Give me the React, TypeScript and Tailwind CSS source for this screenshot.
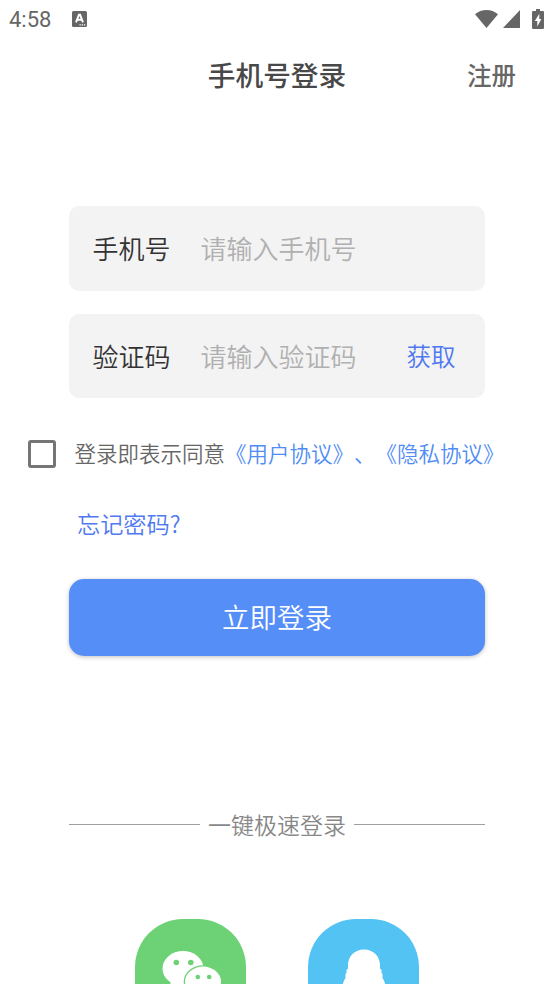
import React from "react";

interface FieldProps {
    label: string;
    placeholder: string;
    action?: string;
}

const StatusBar: React.FC = () => {
    return (
        <div className="flex h-[38px] items-center justify-between pl-[9px] pr-[10px] text-[#666]">
            <div className="flex items-center gap-[21px]">
                <span className="pt-px font-[Roboto] text-[22px] font-normal leading-none">4:58</span>
                <svg width="15" height="17" viewBox="0 0 15 17" fill="currentColor">
                    <rect width="15" height="16" rx="1.5"/>
                    <path d="M4 11.300 6.900 3.800h1.200l2.900 7.500M5.200 8.800h4.600" fill="none" stroke="#fff" strokeWidth="1.900"/>
                    <path d="M7.500 13.300h1.300v1.200H7.500zM9.700 13.300H11v1.200H9.700zM11.900 13.300h1.300v1.200h-1.300z" fill="#fff"/>
                </svg>
            </div>
            <div className="flex items-center">
                <svg width="23" height="18" viewBox="0 0 23 18" fill="currentColor">
                    <path d="M0 4.300C3.300 1.400 7.200 0 11.500 0S19.700 1.400 23 4.300L11.500 18z"/>
                </svg>
                <svg className="ml-[5px]" width="17" height="18" viewBox="0 0 17 18" fill="currentColor">
                    <path d="M17 0v18H0z"/>
                </svg>
                <svg className="-mt-px ml-3" width="12" height="20" viewBox="0 0 12 20" fill="currentColor">
                    <path d="M4 0h4v2h2.800A1.200 1.200 0 0 1 12 3.200v15.600a1.200 1.200 0 0 1-1.200 1.200H1.200A1.200 1.200 0 0 1 0 18.800V3.200A1.200 1.200 0 0 1 1.200 2H4z"/>
                    <path d="M7.300 4.800 2.800 12h2.500v5.500L9.300 10H7.300z" fill="#fff"/>
                </svg>
            </div>
        </div>
    );
};

const Field: React.FC<FieldProps> = ({label, placeholder, action}) => {
    return (
        <div className="flex h-[84.500px] items-center rounded-[10px] bg-[#f3f3f3] pl-[23.500px] pr-[29.500px] text-[26px]">
            <span className="w-[108px] text-[#333]">{label}</span>
            <span className="flex-1 text-[#b0b0b0]">{placeholder}</span>
            {action && <button className="text-[24.500px] text-[#5078f0]">{action}</button>}
        </div>
    );
};

const WechatIcon: React.FC = () => {
    return (
        <svg width="111" height="111" viewBox="0 0 111 111">
            <ellipse cx="48" cy="49.500" rx="20.500" ry="17.500" fill="#fff"/>
            <path d="m36 62-2 9 9-5z" fill="#fff"/>
            <ellipse cx="68" cy="62.500" rx="19.300" ry="16.300" fill="#6dd275"/>
            <ellipse cx="68" cy="62.500" rx="18" ry="15" fill="#fff"/>
            <path d="m74 75 7 6-1-10z" fill="#fff"/>
            <g fill="#6dd275">
                <circle cx="41.300" cy="43.500" r="2.800"/>
                <circle cx="55.800" cy="43.500" r="2.800"/>
                <circle cx="62.800" cy="58" r="2.300"/>
                <circle cx="74.200" cy="58" r="2.300"/>
            </g>
        </svg>
    );
};

const QQIcon: React.FC = () => {
    return (
        <svg width="111" height="111" viewBox="0 0 111 111" fill="#fff">
            <path d="M56 30.500c-9.500 0-16 7-16 15.500v3.500l-1.500 1.500v3l-1 1v4C35 62.500 34 67 34.500 72c.5 2 2.500 0 4-3 .7 4 2.300 7 5 9-4 2-3 6 3 6 4 0 7-1 9.500-2.500C58.500 83 61.500 84 65.500 84c6 0 7-4 3-6 2.700-2 4.300-5 5-9 1.500 3 3.500 5 4 3 .5-5-.5-9.500-3-13v-4l-1-1v-3L72 49.500V46c0-8.500-6.500-15.500-16-15.500z"/>
        </svg>
    );
};

const App: React.FC = () => {
    return (
        <main className="h-[984px] w-[554px] overflow-hidden bg-white font-['Noto_Sans_CJK_SC',sans-serif] font-[350] leading-none">
            <StatusBar/>

            <header className="grid h-[76px] grid-cols-[1fr_auto_1fr] items-center pb-0.5">
                <h1 className="col-start-2 text-[27.700px] font-medium text-[#484848]">手机号登录</h1>
                <button className="mr-[38px] justify-self-end text-[24.500px] font-medium text-[#666]">注册</button>
            </header>

            <section className="mx-[69px] mt-[92px] flex flex-col gap-[23px]">
                <Field label="手机号" placeholder="请输入手机号"/>
                <Field label="验证码" placeholder="请输入验证码" action="获取"/>
            </section>

            <div className="mt-[41.500px] flex h-7 items-center whitespace-nowrap pl-7 text-[21.500px] [text-spacing-trim:space-all]">
                <span className="mr-[18.500px] h-7 w-7 shrink-0 rounded-[3px] border-3 border-[#757575]"/>
                <span className="pb-0.5 text-[#666]">登录即表示同意</span>
                <span className="pb-0.5 text-[#508cf5]">《用户协议》、《隐私协议》</span>
            </div>

            <a className="ml-[77px] mt-[44.500px] block w-fit text-[23.200px] text-[#5078f0]">忘记密码?</a>

            <button
                className="mx-[69px] mt-[43.500px] flex h-[77px] w-[416px] items-center justify-center rounded-[15px] bg-[#558ef7] pb-px text-[27.500px] text-white shadow-[0_1px_4px_rgba(0,0,0,0.25)]">
                立即登录
            </button>

            <div className="mx-[69px] mt-[157.500px] flex items-center gap-2 text-[23px] text-[#888]">
                <span className="h-px flex-1 bg-[#a0a0a0]"/>
                <span>一键极速登录</span>
                <span className="h-px flex-1 bg-[#a0a0a0]"/>
            </div>

            <div className="mt-[83px] flex justify-center gap-[62px]">
                <button className="h-[111px] w-[111px] rounded-[48px] bg-[#6dd275]"><WechatIcon/></button>
                <button className="h-[111px] w-[111px] rounded-[48px] bg-[#52c3f2]"><QQIcon/></button>
            </div>
        </main>
    );
};

export default App;
